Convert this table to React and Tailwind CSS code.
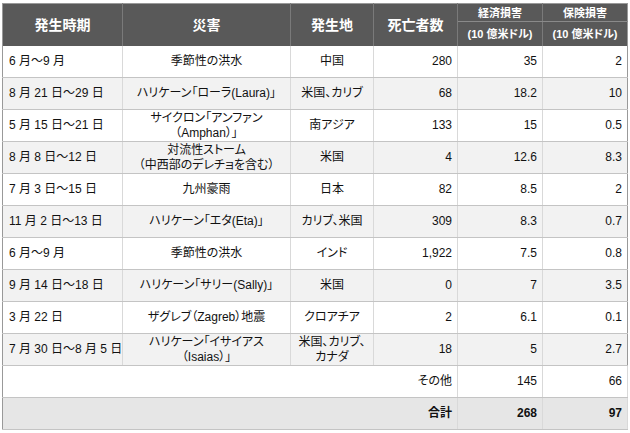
import React from 'react';

const rows = [
  { period: '6 月～9 月', event: ['季節性の洪水'], place: ['中国'], deaths: '280', econ: '35', ins: '2' },
  { period: '8 月 21 日～29 日', event: ['ハリケーン「ローラ(Laura)」'], place: ['米国、カリブ'], deaths: '68', econ: '18.2', ins: '10' },
  { period: '5 月 15 日～21 日', event: ['サイクロン「アンファン', '（Amphan）」'], place: ['南アジア'], deaths: '133', econ: '15', ins: '0.5' },
  { period: '8 月 8 日～12 日', event: ['対流性ストーム', '（中西部のデレチョを含む）'], place: ['米国'], deaths: '4', econ: '12.6', ins: '8.3' },
  { period: '7 月 3 日～15 日', event: ['九州豪雨'], place: ['日本'], deaths: '82', econ: '8.5', ins: '2' },
  { period: '11 月 2 日～13 日', event: ['ハリケーン「エタ(Eta)」'], place: ['カリブ、米国'], deaths: '309', econ: '8.3', ins: '0.7' },
  { period: '6 月～9 月', event: ['季節性の洪水'], place: ['インド'], deaths: '1,922', econ: '7.5', ins: '0.8' },
  { period: '9 月 14 日～18 日', event: ['ハリケーン「サリー(Sally)」'], place: ['米国'], deaths: '0', econ: '7', ins: '3.5' },
  { period: '3 月 22 日', event: ['ザグレブ（Zagreb）地震'], place: ['クロアチア'], deaths: '2', econ: '6.1', ins: '0.1' },
  { period: '7 月 30 日～8 月 5 日', event: ['ハリケーン「イサイアス', '（Isaias）」'], place: ['米国、カリブ、', 'カナダ'], deaths: '18', econ: '5', ins: '2.7' },
];

const font = { fontFamily: '"Liberation Sans", "Noto Sans CJK JP", sans-serif', fontFeatureSettings: '"palt"' };

const Lines = ({ lines }) => (
  <>
    {lines.map((l, i) => (
      <div key={i}>{l}</div>
    ))}
  </>
);

export default function App() {
  const td = 'border-r border-b border-r-[#d9d9d9] border-b-[#c4c4c4] border-b-dotted h-[32px] p-0 leading-[15px] whitespace-nowrap overflow-hidden';
  return (
    <div className="w-[630px] h-[433px] bg-white pl-[2px] pt-[3px]" style={font}>
      <table className="table-fixed border-collapse w-[625px] text-[12px] text-[#111] border border-[#999]">
        <colgroup>
          <col className="w-[120px]" />
          <col className="w-[168px]" />
          <col className="w-[83px]" />
          <col className="w-[84px]" />
          <col className="w-[85px]" />
          <col className="w-[85px]" />
        </colgroup>
        <thead>
          <tr className="bg-[#595959] text-white font-bold">
            <th rowSpan={2} className="border-r border-[#7a7a7a] text-[14px] p-0 leading-[16px]">発生時期</th>
            <th rowSpan={2} className="border-r border-[#7a7a7a] text-[14px] p-0 leading-[16px]">災害</th>
            <th rowSpan={2} className="border-r border-[#7a7a7a] text-[14px] p-0 leading-[16px]">発生地</th>
            <th rowSpan={2} className="border-r border-[#7a7a7a] text-[14px] p-0 leading-[16px]">死亡者数</th>
            <th className="border-r border-b border-r-[#7a7a7a] border-b-[#8a8a8a] border-b-dotted text-[11px] h-[18px] p-0 leading-[14px]">経済損害</th>
            <th className="border-b border-b-[#8a8a8a] border-b-dotted text-[11px] p-0 leading-[14px]">保険損害</th>
          </tr>
          <tr className="bg-[#595959] text-white font-bold">
            <th className="border-r border-[#7a7a7a] text-[11px] h-[24px] p-0 leading-[14px]">(10 億米ドル)</th>
            <th className="text-[11px] p-0 leading-[14px]">(10 億米ドル)</th>
          </tr>
        </thead>
        <tbody>
          {rows.map((r, i) => (
            <tr key={i} className={i % 2 === 1 ? 'bg-[#f2f2f2]' : 'bg-white'}>
              <td className={`${td} text-left pl-[6px]`}>{r.period}</td>
              <td className={`${td} text-center`}><Lines lines={r.event} /></td>
              <td className={`${td} text-center`}><Lines lines={r.place} /></td>
              <td className={`${td} text-right pr-[5px]`}>{r.deaths}</td>
              <td className={`${td} text-right pr-[5px]`}>{r.econ}</td>
              <td className={`${td} text-right pr-[5px] border-r-0`}>{r.ins}</td>
            </tr>
          ))}
          <tr className="bg-white">
            <td colSpan={4} className={`${td} text-right pr-[5px]`}>その他</td>
            <td className={`${td} text-right pr-[5px]`}>145</td>
            <td className={`${td} text-right pr-[5px]`}>66</td>
          </tr>
          <tr className="bg-[#e6e6e6] font-bold">
            <td colSpan={4} className={`${td} text-right pr-[5px]`}>合計</td>
            <td className={`${td} text-right pr-[5px]`}>268</td>
            <td className={`${td} text-right pr-[5px]`}>97</td>
          </tr>
        </tbody>
      </table>
    </div>
  );
}
